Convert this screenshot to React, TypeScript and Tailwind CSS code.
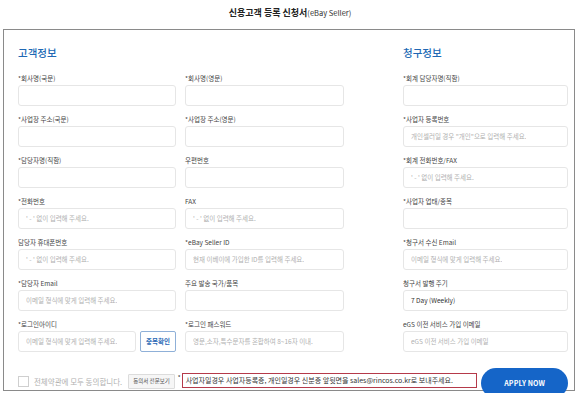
import React from 'react';

type Field = { label: string; placeholder?: string; value?: string; check?: boolean };

const col1: Field[] = [
  { label: '*회사명(국문)' },
  { label: '*사업장 주소(국문)' },
  { label: '*담당자명(직함)' },
  { label: '*전화번호', placeholder: "' - ' 없이 입력해 주세요." },
  { label: '담당자 휴대폰번호', placeholder: "' - ' 없이 입력해 주세요." },
  { label: '*담당자 Email', placeholder: '이메일 형식에 맞게 입력해 주세요.' },
  { label: '*로그인아이디', placeholder: '이메일 형식에 맞게 입력해 주세요.', check: true },
];

const col2: Field[] = [
  { label: '*회사명(영문)' },
  { label: '*사업장 주소(영문)' },
  { label: '우편번호' },
  { label: 'FAX', placeholder: "' - ' 없이 입력해 주세요." },
  { label: '*eBay Seller ID', placeholder: '현재 이베이에 가입한 ID를 입력해 주세요.' },
  { label: '주요 발송 국가/품목' },
  { label: '*로그인 패스워드', placeholder: '영문,소자,특수문자를 혼합하여 8~16자 이내.' },
];

const col3: Field[] = [
  { label: '*회계 담당자명(직함)' },
  { label: '*사업자 등록번호', placeholder: '개인셀러일 경우 "개인"으로 입력해 주세요.' },
  { label: '*회계 전화번호/FAX', placeholder: "' - ' 없이 입력해 주세요." },
  { label: '*사업자 업태/종목' },
  { label: '*청구서 수신 Email', placeholder: '이메일 형식에 맞게 입력해 주세요.' },
  { label: '청구서 발행 주기', value: '7 Day (Weekly)' },
  { label: 'eGS 이전 서비스 가입 이메일', placeholder: 'eGS 이전 서비스 가입 이메일' },
];

const Input = ({ f }: { f: Field }) => (
  <div className="flex-1 h-[21px] border border-[#e6e6e6] rounded-[3px] bg-white px-[7px] flex items-center">
    {f.value ? (
      <span className="text-[6.5px] text-[#333]">{f.value}</span>
    ) : (
      <span className="text-[6.5px] text-[#b0b0b0] whitespace-nowrap overflow-hidden">{f.placeholder}</span>
    )}
  </div>
);

const Column = ({ fields, width }: { fields: Field[]; width: string }) => (
  <div className={`${width} flex flex-col gap-[8px]`}>
    {fields.map((f, i) => (
      <div key={i} className="flex flex-col">
        <div className="h-[10px] leading-[10px] mb-[2px] text-[6.5px] text-[#444] whitespace-nowrap">{f.label}</div>
        <div className="flex gap-[4px]">
          <Input f={f} />
          {f.check && (
            <div className="w-[36px] h-[21px] border border-[#8fb0d8] rounded-[2px] flex items-center justify-center text-[6.5px] font-bold text-[#2a68b5]">
              중복확인
            </div>
          )}
        </div>
      </div>
    ))}
  </div>
);

export default function App() {
  return (
    <div className="w-[580px] h-[393px] overflow-hidden bg-white font-['Noto_Sans_CJK_KR',sans-serif]">
      <div className="h-[29px] flex items-center justify-center pb-[3px]">
        <span className="text-[9px] font-bold text-[#222]">신용고객 등록 신청서</span>
        <span className="text-[7.5px] text-[#333]">(eBay Seller)</span>
      </div>
      <div className="ml-[3px] w-[572px] h-[362px] border border-[#8a8a8a] pl-[14px] pr-[6px] pt-[16px]">
        <div className="flex">
          <div className="flex flex-col">
            <div className="h-[14px] leading-[14px] text-[10.5px] font-medium text-[#2068b4] mb-[13px]">고객정보</div>
            <div className="flex">
              <Column fields={col1} width="w-[158px]" />
              <div className="w-[9px]" />
              <Column fields={col2} width="w-[159px]" />
            </div>
          </div>
          <div className="w-[59px]" />
          <div className="flex flex-col">
            <div className="h-[14px] leading-[14px] text-[10.5px] font-medium text-[#2068b4] mb-[13px]">청구정보</div>
            <Column fields={col3} width="w-[165px]" />
          </div>
        </div>
        <div className="mt-[16px] flex items-start">
          <div className="mt-[8px] w-[11px] h-[11px] border border-[#cfcfcf] bg-white" />
          <span className="mt-[8px] ml-[5px] text-[7.5px] leading-[11px] text-[#b0b0b0] whitespace-nowrap">전체약관에 모두 동의합니다.</span>
          <div className="mt-[6px] ml-[6px] h-[15px] px-[4px] border border-[#dcdcdc] bg-[#f6f6f6] rounded-[1px] flex items-center text-[5.5px] text-[#555] whitespace-nowrap">
            동의서 전문보기
          </div>
          <span className="mt-[5px] ml-[3px] text-[6px] text-[#333]">*</span>
          <div className="mt-[5px] ml-[1px] w-[297px] h-[15px] border border-[#b53a4a] flex items-center pl-[3px] text-[7px] text-[#333] whitespace-nowrap overflow-hidden">
            사업자일경우 사업자등록증, 개인일경우 신분증 앞뒷면을 sales@rincos.co.kr로 보내주세요.
          </div>
          <div className="ml-[4px] w-[87px] h-[30px] rounded-full bg-[#1565c8] flex items-center justify-center text-[7px] font-bold text-white tracking-[0.1px] relative">
            APPLY NOW
          </div>
        </div>
      </div>
    </div>
  );
}
